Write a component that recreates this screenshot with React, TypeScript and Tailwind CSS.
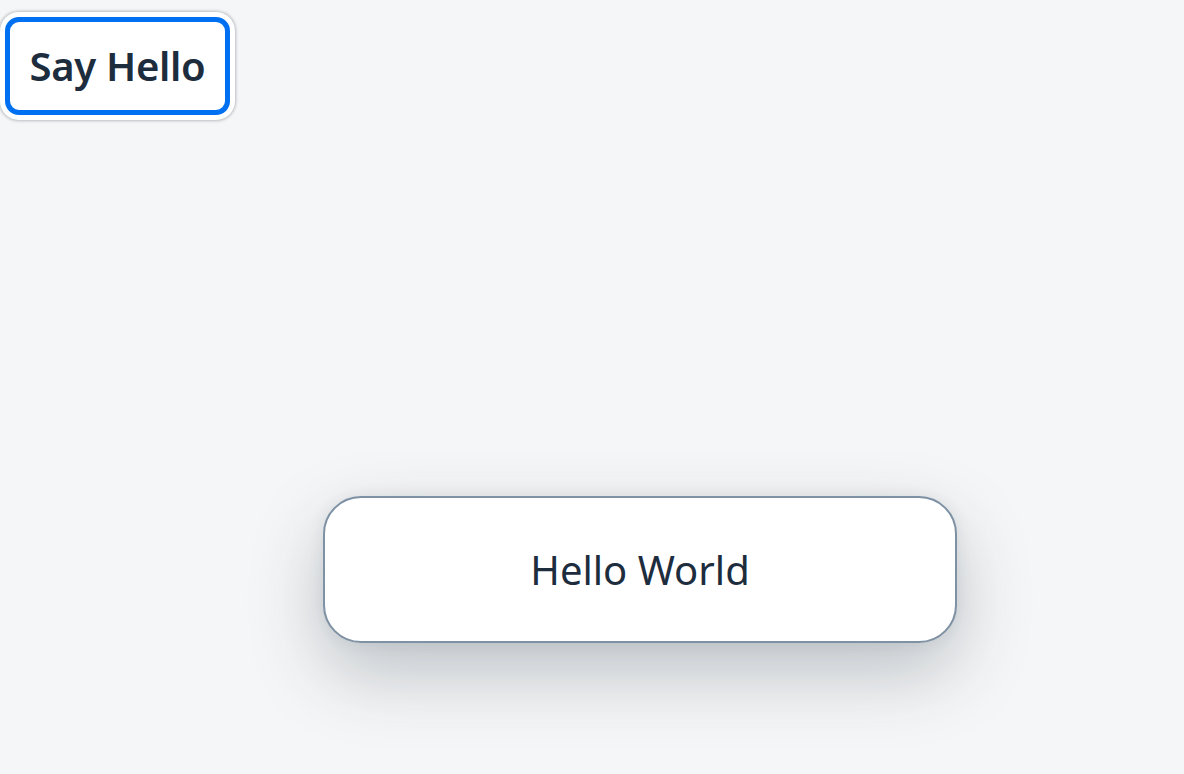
const App = () => {
  return (
    <div className="relative min-h-screen bg-[#f5f6f7] font-['Noto_Sans',_'Open_Sans',_sans-serif] text-[#1d2d3e]">
      {/* Focused button */}
      <div className="pt-[12px]">
        <button className="block w-[235px] h-[108px] p-[5px] bg-white rounded-[19px] shadow-[0_0_3px_1px_rgba(29,45,62,0.28)]">
          <span className="flex w-full h-full items-center justify-center border-[5px] border-[#0070f2] rounded-[14px] text-[40px] font-semibold leading-none tracking-[-0.3px]">
            Say Hello
          </span>
        </button>
      </div>

      {/* Message toast */}
      <div className="absolute left-[323px] top-[496px] w-[634px] h-[147px] flex items-center justify-center bg-white border-[2.5px] border-[#7f91a4] rounded-[38px] shadow-[0_30px_72px_rgba(29,45,62,0.26),0_0_16px_rgba(29,45,62,0.08)]">
        <span className="text-[40px] leading-none">Hello World</span>
      </div>
    </div>
  );
};

export default App;
